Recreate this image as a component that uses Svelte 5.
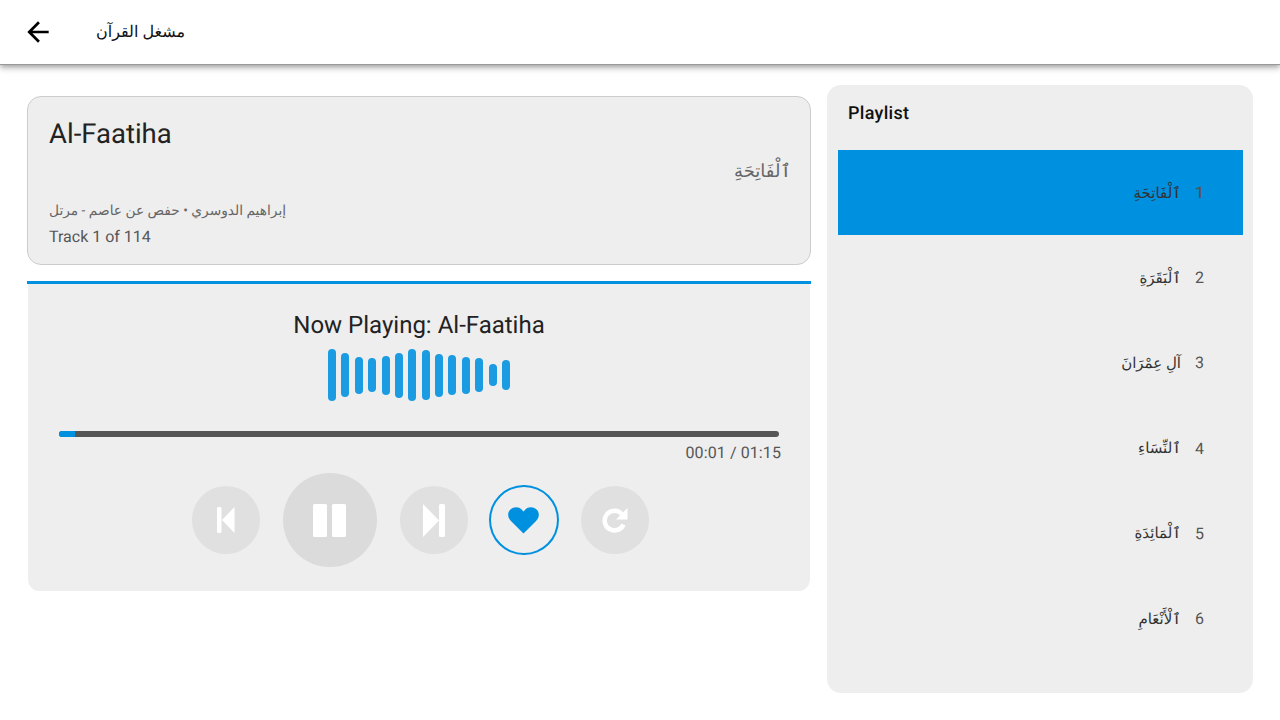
<script>
  const bars = [52, 44, 37, 34, 39, 45, 52, 50, 43, 40, 37, 34, 22, 30];
  const tracks = [
    { n: 1, name: 'ٱلْفَاتِحَةِ', active: true },
    { n: 2, name: 'ٱلْبَقَرَةِ' },
    { n: 3, name: 'آلِ عِمْرَانَ' },
    { n: 4, name: 'ٱلنِّسَاءِ' },
    { n: 5, name: 'ٱلْمَائِدَةِ' },
    { n: 6, name: 'ٱلْأَنْعَامِ' }
  ];
</script>

<div class="page">
  <header class="bar">
    <button class="back" aria-label="Back">
      <svg width="32" height="32" viewBox="0 0 24 24"><path d="M20 11H7.830l5.590-5.590L12 4l-8 8 8 8 1.410-1.410L7.830 13H20v-2z" fill="#000" /></svg>
    </button>
    <h1 dir="rtl">مشغل القرآن</h1>
  </header>

  <main class="content">
    <section class="left">
      <div class="info">
        <div class="title">Al-Faatiha</div>
        <div class="arabic" dir="rtl">ٱلْفَاتِحَةِ</div>
        <div class="reciter">إبراهيم الدوسري • حفص عن عاصم - مرتل</div>
        <div class="count">Track 1 of 114</div>
      </div>

      <div class="player">
        <div class="now">Now Playing: Al-Faatiha</div>
        <div class="wave">
          {#each bars as h}
            <span class="wbar" style="height: {h}px"></span>
          {/each}
        </div>
        <div class="track"><div class="fill" style="width: 2.2%"></div></div>
        <div class="time">00:01 / 01:15</div>
        <div class="controls">
          <button class="ctl" aria-label="Previous">
            <svg width="18" height="26" viewBox="0 0 18 26"><rect x="0" y="0" width="4.500" height="26" rx="1" fill="#fff" /><path d="M17.500 0v26L5 13z" fill="#fff" /></svg>
          </button>
          <button class="ctl big" aria-label="Pause">
            <svg width="33" height="33" viewBox="0 0 33 33"><rect width="14" height="33" rx="1.500" fill="#fff" /><rect x="19" width="14" height="33" rx="1.500" fill="#fff" /></svg>
          </button>
          <button class="ctl" aria-label="Next">
            <svg width="22" height="33" viewBox="0 0 22 33"><path d="M0 0v33L16 16.500z" fill="#fff" /><rect x="16" y="0" width="6" height="33" rx="1.500" fill="#fff" /></svg>
          </button>
          <button class="ctl fav" aria-label="Favourite">
            <svg width="31" height="27" viewBox="0 0 32 28"><path d="M16 27.500 3 14.500C-1 10.500-.5 5 2.500 2.500 6-.8 11.500-.3 14 2.500L16 4.700l2-2.200c2.500-2.800 8-3.300 11.500 0 3 2.500 3.500 8-.5 12z" fill="#0090e0" /></svg>
          </button>
          <button class="ctl" aria-label="Repeat">
            <svg width="26" height="26" viewBox="0 0 26 26"><path d="M21.500 17.500a9.800 9.800 0 1 1-1.800-10.500" fill="none" stroke="#fff" stroke-width="4.500" /><path d="M25.500 1v11.500H14z" fill="#fff" /></svg>
          </button>
        </div>
      </div>
    </section>

    <aside class="list">
      <h2>Playlist</h2>
      <ul>
        {#each tracks as t}
          <li class:active={t.active}>
            <span class="name" dir="rtl">{t.name}</span>
            <span class="num">{t.n}</span>
          </li>
        {/each}
      </ul>
    </aside>
  </main>
</div>

<style>
  :global(body) {
    margin: 0;
    background: #fff;
    font-family: Roboto, "DejaVu Sans", sans-serif;
    text-rendering: geometricPrecision;
  }
  .page {
    width: 1280px;
    height: 720px;
    overflow: hidden;
  }
  .bar {
    background: #fff;
    display: flex;
    align-items: center;
    box-shadow: 0 2px 4px -1px rgba(0,0,0,.2), 0 4px 5px 0 rgba(0,0,0,.14), 0 1px 10px 0 rgba(0,0,0,.12);
    border-bottom: 1px solid #999;
    box-sizing: border-box;
    height: 65px;
    padding-left: 22px;
  }
  .back {
    width: 32px;
    height: 32px;
    padding: 0;
    border: 0;
    background: none;
    display: flex;
    margin-right: 42px;
  }
  h1 {
    margin: 0;
    font-size: 16px;
    line-height: 24px;
    font-weight: 400;
    color: #111;
    white-space: nowrap;
  }
  .content {
    display: flex;
    gap: 16px;
    padding: 20px 27px 0;
    align-items: flex-start;
  }
  .left {
    width: 784px;
    padding-top: 11px;
  }
  .info {
    box-sizing: border-box;
    height: 169px;
    background: #eee;
    border: 1px solid #ccc;
    border-radius: 14px;
    padding: 22px 19px 0 21px;
    color: #666;
  }
  .title {
    font-size: 27.500px;
    line-height: 30px;
    color: #222;
  }
  .arabic {
    font-size: 18px;
    line-height: 30px;
    margin-top: 8px;
  }
  .reciter {
    font-size: 13.750px;
    line-height: 22px;
    margin-top: 13px;
  }
  .count {
    font-size: 16px;
    line-height: 22px;
    margin-top: 4px;
    color: #555;
  }
  .player {
    box-sizing: border-box;
    height: 310px;
    margin-top: 16px;
    background: linear-gradient(#eee, #eee) content-box;
    border-top: 3px solid #0090e0;
    display: flex;
    flex-direction: column;
    align-items: center;
    padding: 0 1px;
    border-radius: 0 0 12px 12px;
    overflow: hidden;
  }
  .now {
    font-size: 24px;
    line-height: 28px;
    color: #222;
    margin-top: 27px;
  }
  .wave {
    height: 52px;
    display: flex;
    align-items: center;
    gap: 5.400px;
    margin-top: 10px;
  }
  .wbar {
    width: 8px;
    border-radius: 4px;
    background: #1a9be2;
  }
  .track {
    width: 720px;
    height: 6px;
    background: #555;
    border-radius: 3px;
    margin-top: 30px;
    overflow: hidden;
  }
  .fill {
    height: 100%;
    background: #0090e0;
  }
  .time {
    width: 724px;
    text-align: right;
    font-size: 16px;
    letter-spacing: 0.1px;
    line-height: 19px;
    color: #555;
    margin-top: 6px;
  }
  .controls {
    display: flex;
    align-items: center;
    gap: 23.500px;
    margin-top: 11px;
    margin-left: 2.500px;
  }
  .ctl {
    width: 67.500px;
    height: 68px;
    border-radius: 50%;
    border: 0;
    padding: 0;
    background: #e0e0e0;
    display: flex;
    align-items: center;
    justify-content: center;
  }
  .big {
    width: 93.500px;
    height: 94px;
    background: #dbdbdb;
  }
  .fav {
    box-sizing: border-box;
    width: 69.500px;
    height: 70px;
    margin-left: -2px;
    margin-right: -1px;
    background: transparent;
    border: 2px solid #0090e0;
  }
  .list {
    box-sizing: border-box;
    width: 426px;
    height: 608px;
    background: #eee;
    border-radius: 14px;
    padding: 0 10px 0 11px;
  }
  h2 {
    margin: 0;
    font-size: 18px;
    font-weight: 500;
    line-height: 21px;
    color: #111;
    padding: 18px 10px 0;
    letter-spacing: 0.3px;
  }
  ul {
    list-style: none;
    margin: 26px 0 0;
    padding: 0;
  }
  li {
    height: 85.200px;
    display: flex;
    align-items: center;
    justify-content: flex-end;
    gap: 14px;
    padding-right: 38px;
    color: #333;
  }
  li.active {
    background: #0090e0;
  }
  .name {
    font-size: 15px;
    line-height: 20px;
  }
  .num {
    font-size: 16px;
    color: #555;
    width: 10px;
    text-align: left;
  }
  .active .num {
    font-weight: 500;
  }
</style>
